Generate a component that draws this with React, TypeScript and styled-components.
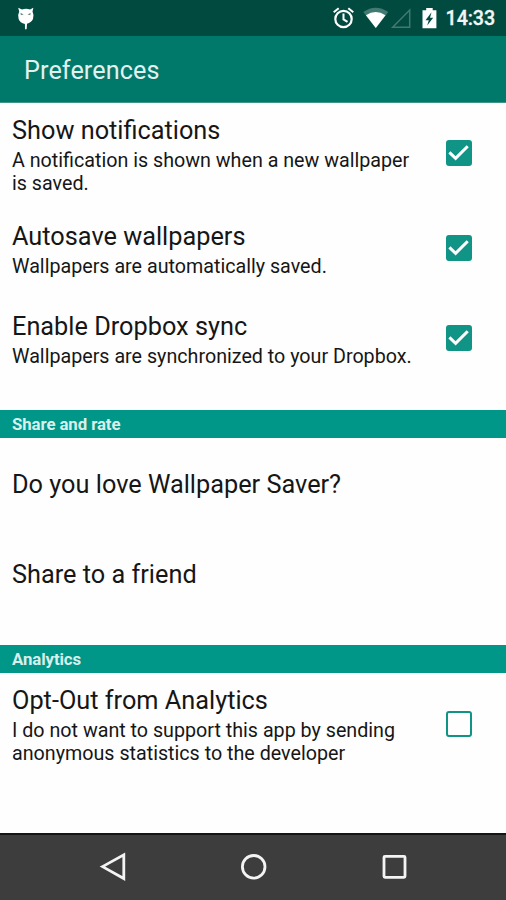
import React from "react";
import styled, { createGlobalStyle } from "styled-components";

const Global = createGlobalStyle`
  * { box-sizing: border-box; }
  body { margin: 0; background: #fff; font-family: Roboto, "Liberation Sans", sans-serif; }
`;

const Screen = styled.div`
  width: 506px;
  height: 900px;
  display: flex;
  flex-direction: column;
  overflow: hidden;
  background: #fefefe;
  color: #161616;
`;

const StatusBar = styled.header`
  height: 36px;
  flex: none;
  display: flex;
  justify-content: space-between;
  background: #004a40;
`;

const StatusRight = styled.div`
  display: flex;
  svg { flex: none; }
`;

const Clock = styled.span`
  margin-right: 11px;
  font-size: 19.7px;
  font-weight: 500;
  line-height: 38px;
  letter-spacing: -0.1px;
  color: #f2f7f6;
  -webkit-text-stroke: 0.3px #f2f7f6;
`;

const Toolbar = styled.div`
  height: 67px;
  flex: none;
  padding-left: 24px;
  background: #00796b;
  border-bottom: 1px solid #3f9488;
  color: #e2f1ef;
  font-size: 25.2px;
  line-height: 70px;
  letter-spacing: 0.1px;
`;

const List = styled.main`
  flex: 1;
  min-height: 0;
`;

const Row = styled.section<{ $tall?: boolean }>`
  height: ${(p) => (p.$tall ? 100 : 89.7)}px;
  display: flex;
  align-items: center;
  justify-content: space-between;
  padding: 0 34px 0 12px;
`;

const Labels = styled.div`
  padding-top: 2px;
  white-space: pre;
`;

const Title = styled.div`
  font-size: 25.3px;
  line-height: 30px;
`;

const Summary = styled.div`
  padding-top: 3px;
  margin-bottom: -2px;
  font-size: 19.7px;
  line-height: 23px;
`;

const Category = styled.h2<{ $gap: number }>`
  height: 28px;
  margin: ${(p) => p.$gap}px 0 1px;
  padding-left: 12px;
  background: #009688;
  color: #d9efec;
  font-size: 16.8px;
  font-weight: 700;
  line-height: 29px;
  letter-spacing: -0.08px;
`;

const Box = styled.span<{ $checked: boolean }>`
  width: 26px;
  height: 26px;
  flex: none;
  display: flex;
  border: 2.5px solid #109486;
  border-radius: 3px;
  background: ${(p) => (p.$checked ? "#109486" : "transparent")};
  svg { margin: -2px; flex: none; }
`;

const NavBar = styled.nav`
  height: 67px;
  flex: none;
  border-top: 2px solid #151515;
  background: #3d3d3d;
  svg { display: block; }
`;

function Checkbox({ checked }: { checked: boolean }) {
  return (
    <Box $checked={checked} role="checkbox" aria-checked={checked}>
      {checked && (
        <svg width="25" height="25" viewBox="0 0 25 25" fill="none">
          <path d="M3.4 12.4 9.6 18.4 21.7 6.2" stroke="#fff" strokeWidth="3" />
        </svg>
      )}
    </Box>
  );
}

interface Item {
  title: string;
  summary?: string;
  checked?: boolean;
  tall?: boolean;
}

function Preference({ title, summary, checked, tall }: Item) {
  return (
    <Row $tall={tall}>
      <Labels>
        <Title>{title}</Title>
        {summary && <Summary>{summary}</Summary>}
      </Labels>
      {checked !== undefined && <Checkbox checked={checked} />}
    </Row>
  );
}

export default function App() {
  return (
    <>
      <Global />
      <Screen>
        <StatusBar>
          <svg width="50" height="36" viewBox="0 0 50 36">
            <path d="M18.2 7.7 22 9.5Q26 8 30 9.5L33.4 7.7 32.5 11.5Q34.3 15 33 19 31.2 22.8 27 23.8L26.7 28.8Q25.8 30 25 28.8L24.9 24Q20 23 18.6 19 17.4 15 19.2 11.5Z" fill="#fff" />
            <path d="m20.5 12.8 3.2 1.7-2.8.8Zm10.2 0-3.1 1.7 2.7.8Z" fill="#6b8983" />
          </svg>
          <StatusRight>
            <svg width="126" height="36" viewBox="0 0 126 36" fill="none">
              <circle cx="23.5" cy="19" r="8.2" stroke="#fff" strokeWidth="2.2" />
              <path d="M23.5 13.5v5.9l4 2.5M13.7 12.3l5-4.1M28.3 8.2l5 4.1" stroke="#fff" strokeWidth="2" />
              <path d="M43.3 12Q55.5 3.5 68.3 12L55.8 28Z" fill="#427a71" />
              <path d="M45.9 15.2Q55.7 8.7 65.5 15.2L55.8 28Z" fill="#fff" />
              <path d="M72.7 27.2 89.7 10V27.2Z" stroke="#427a71" strokeWidth="1.5" />
              <path d="M102.5 10.3h3.7V8h6.5v2.3h3.7V28.2h-13.9Z" fill="#fff" />
              <path d="m111.5 12.2-6 8h3.3l-1.6 5.3 6-7.7h-3.2Z" fill="#004a40" />
            </svg>
            <Clock>14:33</Clock>
          </StatusRight>
        </StatusBar>
        <Toolbar>Preferences</Toolbar>
        <List>
          <Preference tall title="Show notifications" summary={"A notification is shown when a new wallpaper\nis saved."} checked />
          <Preference title="Autosave wallpapers" summary="Wallpapers are automatically saved." checked />
          <Preference title="Enable Dropbox sync" summary="Wallpapers are synchronized to your Dropbox." checked />
          <Category $gap={28}>Share and rate</Category>
          <Preference title="Do you love Wallpaper Saver?" />
          <Preference title="Share to a friend" />
          <Category $gap={26}>Analytics</Category>
          <Preference tall title="Opt-Out from Analytics" summary={"I do not want to support this app by sending\nanonymous statistics to the developer"} checked={false} />
        </List>
        <NavBar>
          <svg width="506" height="65" viewBox="0 835 506 65" fill="none" stroke="#f4f4f4" strokeWidth="2.8">
            <path d="M102.5 866.6 123.8 854.8V878.5Z" />
            <circle cx="253.7" cy="866.8" r="11.3" />
            <rect x="384" y="856.3" width="21" height="21" rx="1" />
          </svg>
        </NavBar>
      </Screen>
    </>
  );
}
